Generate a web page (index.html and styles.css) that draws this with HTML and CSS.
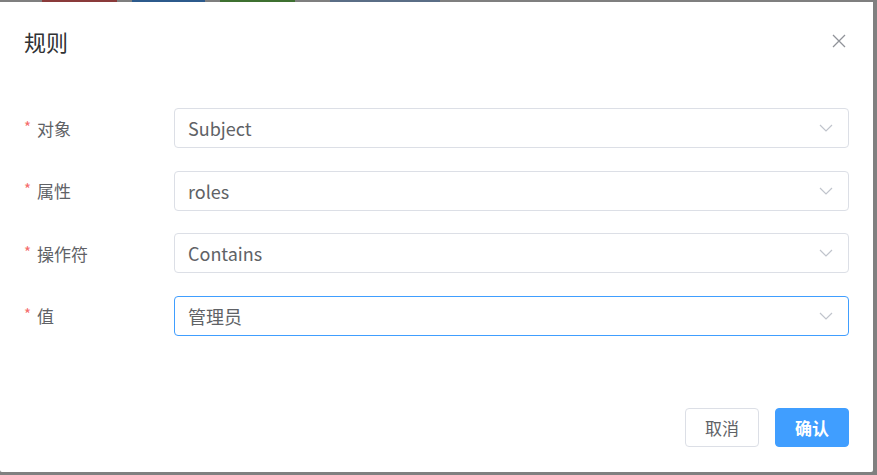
FILE: index.html
```html
<!DOCTYPE html>
<html lang="zh">
<head>
<meta charset="utf-8">
<title>规则</title>
<link rel="stylesheet" href="styles.css">
</head>
<body>
<div class="backdrop-strip">
  <span class="seg seg-red"></span>
  <span class="seg seg-blue"></span>
  <span class="seg seg-green"></span>
  <span class="seg seg-text"></span>
</div>
<div class="page">
  <div class="dialog">
    <div class="dialog-header">
      <span class="dialog-title">规则</span>
      <button class="dialog-close" aria-label="关闭">
        <svg width="14" height="14" viewBox="0 0 14 14"><path d="M1 1L13 13M13 1L1 13" stroke="#909399" stroke-width="1.3" fill="none"/></svg>
      </button>
    </div>
    <div class="dialog-body">
      <div class="form-item">
        <label class="form-label"><span class="req">*</span>对象</label>
        <div class="select"><span class="select-value">Subject</span><svg class="chev" width="14" height="8" viewBox="0 0 14 8"><path d="M1 1L7 7L13 1" stroke="#c0c4cc" stroke-width="1.2" fill="none"/></svg></div>
      </div>
      <div class="form-item">
        <label class="form-label"><span class="req">*</span>属性</label>
        <div class="select"><span class="select-value">roles</span><svg class="chev" width="14" height="8" viewBox="0 0 14 8"><path d="M1 1L7 7L13 1" stroke="#c0c4cc" stroke-width="1.2" fill="none"/></svg></div>
      </div>
      <div class="form-item">
        <label class="form-label"><span class="req">*</span>操作符</label>
        <div class="select"><span class="select-value">Contains</span><svg class="chev" width="14" height="8" viewBox="0 0 14 8"><path d="M1 1L7 7L13 1" stroke="#c0c4cc" stroke-width="1.2" fill="none"/></svg></div>
      </div>
      <div class="form-item">
        <label class="form-label"><span class="req">*</span>值</label>
        <div class="select is-focus"><span class="select-value">管理员</span><svg class="chev" width="14" height="8" viewBox="0 0 14 8"><path d="M1 1L7 7L13 1" stroke="#c0c4cc" stroke-width="1.2" fill="none"/></svg></div>
      </div>
    </div>
    <div class="dialog-footer">
      <button class="btn btn-default">取消</button>
      <button class="btn btn-primary">确认</button>
    </div>
  </div>
</div>
</body>
</html>
```
FILE: styles.css
```css
* { box-sizing: border-box; }
html, body { margin: 0; padding: 0; }
body {
  background: #808080;
  font-family: "Noto Sans CJK SC", "Noto Sans", sans-serif;
  width: 877px;
  height: 475px;
  overflow: hidden;
}
.backdrop-strip {
  height: 2px;
  display: flex;
  background: #7f7f7f;
}
.seg { height: 2px; display: block; }
.seg-red { margin-left: 42px; width: 75px; background: #8a3a3a; }
.seg-blue { margin-left: 15px; width: 73px; background: #2c5a8c; }
.seg-green { margin-left: 15px; width: 75px; background: #3e7030; }
.seg-text { margin-left: 35px; width: 110px; background: #5a6d86; }
.page {
  padding: 0 4px 3px 0;
}
.dialog {
  width: 873px;
  height: 470px;
  background: #fff;
  border-radius: 0 0 2px 2px;
  display: flex;
  flex-direction: column;
}
.dialog-header {
  padding: 24px 24px 0 24px;
  height: 54px;
  display: flex;
  align-items: center;
  justify-content: space-between;
}
.dialog-title {
  font-size: 22px;
  line-height: 26px;
  color: #303133;
}
.dialog-close {
  border: 0;
  background: none;
  padding: 0;
  margin-right: 3px;
  width: 14px;
  height: 14px;
  display: flex;
}
.dialog-body {
  padding: 52px 24px 0 24px;
  display: flex;
  flex-direction: column;
  gap: 22.5px;
}
.form-item {
  display: flex;
  align-items: center;
  height: 40px;
}
.form-label {
  width: 150px;
  font-size: 17px;
  color: #606266;
  display: flex;
  align-items: center;
}
.req {
  color: #f56c6c;
  font-size: 15px;
  margin-right: 6px;
  position: relative;
  top: -2px;
}
.select {
  flex: 1;
  height: 40px;
  border: 1px solid #dcdfe6;
  border-radius: 4px;
  display: flex;
  align-items: center;
  justify-content: space-between;
  padding: 0 15px 0 13px;
}
.select.is-focus { border-color: #409eff; }
.select-value {
  font-size: 18px;
  color: #606266;
}
.dialog-footer {
  margin-top: auto;
  padding: 0 24px 25px 24px;
  display: flex;
  justify-content: flex-end;
  gap: 16px;
}
.btn {
  width: 74px;
  height: 39px;
  border-radius: 4px;
  font-family: inherit;
  font-size: 17px;
  padding: 0;
}
.btn-default {
  background: #fff;
  border: 1px solid #dcdfe6;
  color: #606266;
}
.btn-primary {
  background: #409eff;
  border: 1px solid #409eff;
  color: #fff;
  font-weight: 700;
}
```
